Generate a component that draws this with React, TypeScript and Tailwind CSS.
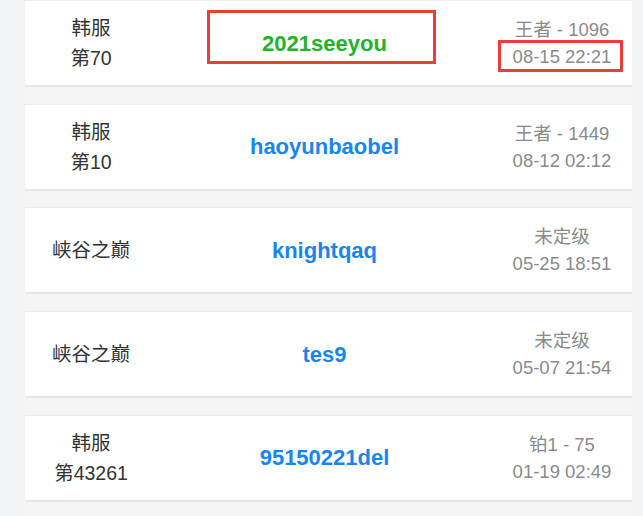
import React from 'react';

type Row = {
  server: string[];
  name: string;
  rank: string;
  time: string;
  highlight?: boolean;
};

const rows: Row[] = [
  { server: ['韩服', '第70'], name: '2021seeyou', rank: '王者 - 1096', time: '08-15 22:21', highlight: true },
  { server: ['韩服', '第10'], name: 'haoyunbaobel', rank: '王者 - 1449', time: '08-12 02:12' },
  { server: ['峡谷之巅'], name: 'knightqaq', rank: '未定级', time: '05-25 18:51' },
  { server: ['峡谷之巅'], name: 'tes9', rank: '未定级', time: '05-07 21:54' },
  { server: ['韩服', '第43261'], name: '95150221del', rank: '铂1 - 75', time: '01-19 02:49' },
];

const RecordCard: React.FC<{ row: Row }> = ({ row }) => (
  <div className="relative flex h-[87px] items-center bg-white border-t border-b-2 border-t-[#ededed] border-b-[#e7e7e7]">
    <div className="flex w-[132px] flex-col items-center text-[19.5px] leading-[30px] text-[#333]">
      {row.server.map((s) => (
        <span key={s}>{s}</span>
      ))}
    </div>
    <div
      className={`flex-1 text-center text-[22px] font-bold ${
        row.highlight ? 'text-[#22b22b]' : 'text-[#1787ef]'
      }`}
    >
      {row.name}
    </div>
    <div className="flex w-[140px] flex-col items-center text-[18.5px] leading-[27px] text-[#8a8a8a]">
      <span>{row.rank}</span>
      <span>{row.time}</span>
    </div>
    {row.highlight && (
      <>
        <div className="absolute left-[182px] top-[9px] h-[54px] w-[229px] border-[3px] border-[#f03b3b]" />
        <div className="absolute left-[473px] top-[39px] h-[32px] w-[125px] border-[3px] border-[#f03b3b]" />
      </>
    )}
  </div>
);

const App: React.FC = () => {
  return (
    <div
      className="min-h-[516px] w-[643px] bg-[#f2f3f5]"
      style={{ fontFamily: '"Liberation Sans", "Noto Sans CJK SC", sans-serif' }}
    >
      <div className="ml-[25px] flex min-h-[516px] w-[607px] flex-col gap-[16.7px] bg-[#f5f5f5]">
        {rows.map((r) => (
          <RecordCard key={r.name} row={r} />
        ))}
      </div>
    </div>
  );
};

export default App;
